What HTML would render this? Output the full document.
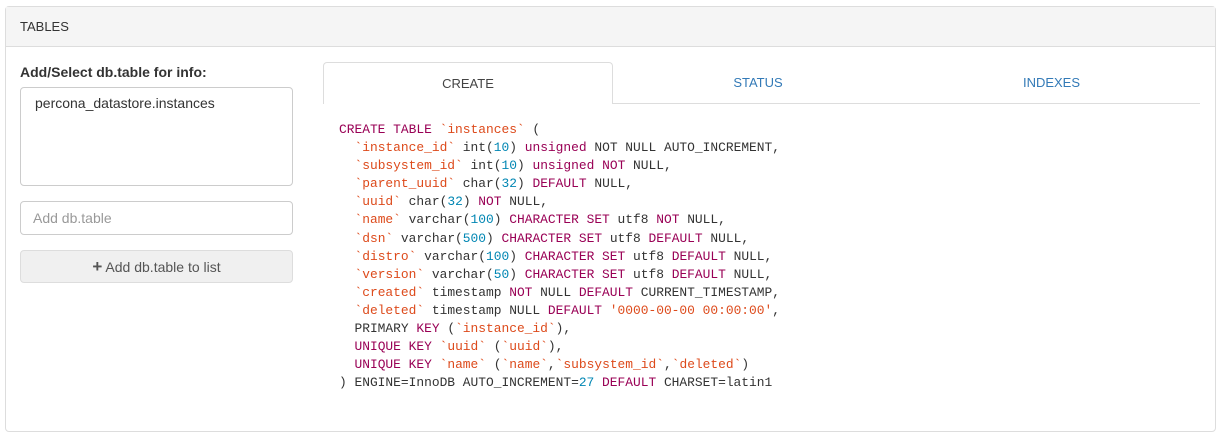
<!DOCTYPE html>
<html><head><style>
body{margin:0;background:#fff;font-family:"Liberation Sans",sans-serif;font-size:14px;color:#333}
.panel{position:absolute;left:5px;top:6px;width:1211px;height:426px;border:1px solid #ddd;border-radius:4px;box-sizing:border-box}
.hd{height:40px;background:#f5f5f5;border-bottom:1px solid #ddd;box-sizing:border-box;padding:12px 14px;font-size:13px;color:#333}
.lbl{position:absolute;left:20px;top:64px;font-weight:bold;font-size:14px}
.sel{position:absolute;left:20px;top:87px;width:273px;height:99px;border:1px solid #ccc;border-radius:4px;box-sizing:border-box;padding:7px 14px;font-size:14px}
.inp{position:absolute;left:20px;top:201px;width:273px;height:34px;border:1px solid #ccc;border-radius:4px;box-sizing:border-box;padding:8px 12px;color:#999;font-size:14px}
.btn{position:absolute;left:20px;top:250px;width:273px;height:33px;border:1px solid #ddd;background:#f0f0f0;border-radius:4px;box-sizing:border-box;text-align:center;padding-top:8px;color:#555;font-size:14px}
.tab{position:absolute;top:62px;height:42px;width:290px;text-align:center;line-height:42px;font-size:13px;color:#337ab7;box-sizing:border-box}
.tab.a{left:323px;border:1px solid #ddd;border-bottom:none;border-radius:4px 4px 0 0;color:#444;background:#fff;height:42px}
.line{position:absolute;left:613px;top:103px;width:587px;height:1px;background:#ddd}
pre{position:absolute;left:339px;top:121px;margin:0;font-family:"Liberation Mono",monospace;font-size:12.9px;line-height:18.1px;color:#333}
.k{color:#990055}.s{color:#dd4a1b}.n{color:#0086b3}
</style></head><body>
<div class="panel"><div class="hd">TABLES</div></div>
<div class="lbl">Add/Select db.table for info:</div>
<div class="sel">percona_datastore.instances</div>
<div class="inp">Add db.table</div>
<div class="btn"><b style="font-size:17px;line-height:10px">+</b> Add db.table to list</div>
<div class="tab a">CREATE</div>
<div class="tab" style="left:613px">STATUS</div>
<div class="tab" style="left:903px;width:297px">INDEXES</div>
<div class="line"></div>
<pre><span class="k">CREATE TABLE</span> <span class="s">`instances`</span> (
  <span class="s">`instance_id`</span> int(<span class="n">10</span>) <span class="k">unsigned</span> NOT NULL AUTO_INCREMENT,
  <span class="s">`subsystem_id`</span> int(<span class="n">10</span>) <span class="k">unsigned</span> <span class="k">NOT</span> NULL,
  <span class="s">`parent_uuid`</span> char(<span class="n">32</span>) <span class="k">DEFAULT</span> NULL,
  <span class="s">`uuid`</span> char(<span class="n">32</span>) <span class="k">NOT</span> NULL,
  <span class="s">`name`</span> varchar(<span class="n">100</span>) <span class="k">CHARACTER SET</span> utf8 <span class="k">NOT</span> NULL,
  <span class="s">`dsn`</span> varchar(<span class="n">500</span>) <span class="k">CHARACTER SET</span> utf8 <span class="k">DEFAULT</span> NULL,
  <span class="s">`distro`</span> varchar(<span class="n">100</span>) <span class="k">CHARACTER SET</span> utf8 <span class="k">DEFAULT</span> NULL,
  <span class="s">`version`</span> varchar(<span class="n">50</span>) <span class="k">CHARACTER SET</span> utf8 <span class="k">DEFAULT</span> NULL,
  <span class="s">`created`</span> timestamp <span class="k">NOT</span> NULL <span class="k">DEFAULT</span> CURRENT_TIMESTAMP,
  <span class="s">`deleted`</span> timestamp NULL <span class="k">DEFAULT</span> <span class="s">'0000-00-00 00:00:00'</span>,
  PRIMARY <span class="k">KEY</span> (<span class="s">`instance_id`</span>),
  <span class="k">UNIQUE KEY</span> <span class="s">`uuid`</span> (<span class="s">`uuid`</span>),
  <span class="k">UNIQUE KEY</span> <span class="s">`name`</span> (<span class="s">`name`</span>,<span class="s">`subsystem_id`</span>,<span class="s">`deleted`</span>)
) ENGINE=InnoDB AUTO_INCREMENT=<span class="n">27</span> <span class="k">DEFAULT</span> CHARSET=latin1</pre>
</body></html>
